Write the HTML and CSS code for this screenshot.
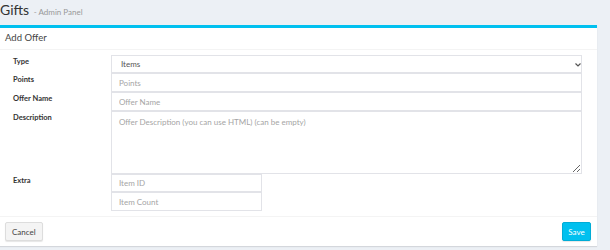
FILE: index.html
```html
<!DOCTYPE html>
<html lang="en">
<head>
    <meta charset="UTF-8">
    <meta name="viewport" content="width=device-width, initial-scale=1.0">
    <title>Gifts - Admin Panel</title>
    <link rel="stylesheet" href="styles.css">
</head>
<body>
    <section class="content-header">
        <h1>Gifts <small>- Admin Panel</small></h1>
    </section>

    <div class="box">
        <div class="box-header">
            <h3>Add Offer</h3>
        </div>
        <form class="box-body">
            <div class="form-group">
                <label>Type</label>
                <div class="field select-wrap">
                    <select class="form-control">
                        <option>Items</option>
                        <option>Points</option>
                    </select>
                    <svg class="chevron" width="6" height="4" viewBox="0 0 6 4">
                        <path d="M0.5 0.5 L3 3 L5.5 0.5" fill="none" stroke="#555" stroke-width="1.2"/>
                    </svg>
                </div>
            </div>
            <div class="form-group">
                <label>Points</label>
                <div class="field"><input class="form-control" type="text" placeholder="Points"></div>
            </div>
            <div class="form-group">
                <label>Offer Name</label>
                <div class="field"><input class="form-control" type="text" placeholder="Offer Name"></div>
            </div>
            <div class="form-group">
                <label>Description</label>
                <div class="field"><textarea class="form-control" placeholder="Offer Description (you can use HTML) (can be empty)"></textarea></div>
            </div>
            <div class="form-group">
                <label>Extra</label>
                <div class="field extra">
                    <input class="form-control" type="text" placeholder="Item ID">
                    <input class="form-control" type="text" placeholder="Item Count">
                </div>
            </div>
        </form>
        <div class="box-footer">
            <button class="btn btn-default">Cancel</button>
            <button class="btn btn-info">Save</button>
        </div>
    </div>
</body>
</html>
```

FILE: styles.css
```css
body {
    margin: 0;
    background-color: #ecf0f5;
    font-family: Lato, "Open Sans", sans-serif;
    color: #333;
    height: 250px;
    overflow: hidden;
}
.content-header {
    height: 25px;
}
.content-header h1 {
    margin: 0;
    padding: 1px 0 0 0;
    font-size: 14px;
    font-weight: normal;
    line-height: 18px;
    color: #333;
}
.content-header small {
    font-size: 8px;
    color: #999;
    margin-left: 1px;
}
.box {
    width: 597px;
    background: white;
    border-top: 3px solid #00c0ef;
    box-shadow: 0 1px 1px rgba(0, 0, 0, 0.1);
}
.box-header {
    height: 21px;
    border-bottom: 1px solid #f4f4f4;
    display: flex;
    align-items: center;
    padding-left: 5px;
}
.box-header h3 {
    margin: 0 0 2px 0;
    font-size: 9.5px;
    font-weight: normal;
    color: #444;
}
.box-body {
    padding: 5px 15px 5px 13px;
    margin: 0;
}
.form-group {
    display: flex;
    align-items: flex-start;
}
.form-group label {
    width: 98px;
    flex-shrink: 0;
    font-size: 7.5px;
    font-weight: bold;
    padding-top: 2px;
}
.field {
    flex: 1;
}
.form-control {
    display: block;
    box-sizing: border-box;
    width: 100%;
    height: 19px;
    margin: 0;
    padding: 0 7px;
    border: 1px solid #e2e3e8;
    border-radius: 0;
    font-family: inherit;
    font-size: 8px;
    color: #555;
    background: white;
    outline: none;
}
.form-control::placeholder {
    color: #a5a5a5;
}
.select-wrap {
    position: relative;
}
select.form-control {
    appearance: none;
    -webkit-appearance: none;
    height: 18px;
    padding-left: 9px;
}
.chevron {
    position: absolute;
    right: 1px;
    top: 8px;
}
textarea.form-control {
    height: 63px;
    padding-top: 5px;
    resize: vertical;
}
.extra {
    flex: none;
    width: 151px;
}
.extra .form-control:first-child {
    height: 18px;
}
.box-footer {
    border-top: 1px solid #f4f4f4;
    padding: 5px 6px 5px 5px;
    display: flex;
    justify-content: space-between;
}
.btn {
    height: 19px;
    padding: 0 6px;
    font-family: inherit;
    font-size: 8px;
    border-radius: 2px;
    border: 1px solid #ddd;
    box-shadow: 0 1px 1px rgba(0, 0, 0, 0.1);
    cursor: pointer;
}
.btn-default {
    background-color: #f4f4f4;
    color: #444;
}
.btn-info {
    background-color: #00c0ef;
    border-color: #00acd6;
    color: white;
    width: 29px;
    padding: 0;
}
```
